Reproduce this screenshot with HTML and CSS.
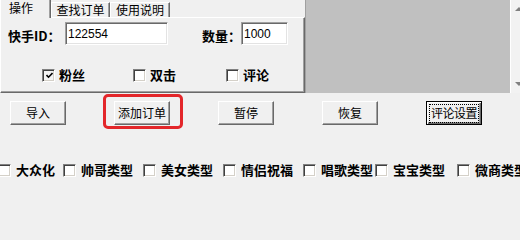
FILE: index.html
```html
<!DOCTYPE html>
<html lang="zh-CN">
<head>
<meta charset="utf-8">
<title>快手订单</title>
<link rel="stylesheet" href="styles.css">
</head>
<body>
<div class="top">
  <div class="tabctl">
    <div class="tabstrip">
      <div class="tab sel">操作</div>
      <div class="tab t2">查找订单</div>
      <div class="tab t3">使用说明</div>
    </div>
    <div class="page">
      <div class="fields">
        <span class="lbl lbl-id">快手ID：</span>
        <div class="input in-id">122554</div>
        <span class="lbl lbl-qty">数量：</span>
        <div class="input in-qty">1000</div>
      </div>
      <div class="checks">
        <div class="opt"><span class="cb checked"><svg width="7" height="7" viewBox="0 0 7 7"><path d="M0.5 3 L2.5 5.2 L6.5 1" fill="none" stroke="#000" stroke-width="1.6"/></svg></span><span class="olbl">粉丝</span></div>
        <div class="opt"><span class="cb"></span><span class="olbl">双击</span></div>
        <div class="opt"><span class="cb"></span><span class="olbl">评论</span></div>
      </div>
    </div>
  </div>
  <div class="list">
    <div class="face"></div>
    <div class="vscroll">
      <span class="arr up"></span>
      <span class="arr down"></span>
    </div>
  </div>
</div>

<div class="buttons">
  <div class="btn">导入</div>
  <div class="btn annot">添加订单</div>
  <div class="btn">暂停</div>
  <div class="btn">恢复</div>
  <div class="btn default"><span class="focus">评论设置</span></div>
</div>

<div class="options">
  <div class="opt"><span class="cb"></span><span class="olbl">大众化</span></div>
  <div class="opt"><span class="cb"></span><span class="olbl">帅哥类型</span></div>
  <div class="opt"><span class="cb"></span><span class="olbl">美女类型</span></div>
  <div class="opt"><span class="cb"></span><span class="olbl">情侣祝福</span></div>
  <div class="opt"><span class="cb"></span><span class="olbl">唱歌类型</span></div>
  <div class="opt"><span class="cb"></span><span class="olbl">宝宝类型</span></div>
  <div class="opt"><span class="cb"></span><span class="olbl">微商类型</span></div>
</div>
</body>
</html>
```

FILE: styles.css
```css
* { box-sizing: border-box; }
html, body { margin: 0; padding: 0; }
body {
  width: 520px;
  height: 215px;
  overflow: hidden;
  background: #f0f0f0;
  font-family: "Noto Sans CJK SC", "Liberation Sans", sans-serif;
  font-size: 12px;
  color: #000;
}

.top {
  display: flex;
  height: 93px;
}

.tabctl {
  width: 305px;
  flex: none;
  display: flex;
  flex-direction: column;
}

.tabstrip {
  display: flex;
  align-items: flex-end;
  height: 17px;
  flex: none;
}

.tab {
  height: 15px;
  line-height: 14px;
  text-align: center;
  border-top: 1px solid #fff;
  border-left: 1px solid #fff;
  border-right: 1px solid #696969;
  box-shadow: inset -1px 0 #a0a0a0;
  background: #f0f0f0;
}
.tab.sel {
  width: 51px;
  height: 18px;
  margin-bottom: -1px;
  padding: 1px 0 0 8px;
  text-align: left;
  line-height: 14px;
  border-top: none;
  position: relative;
  z-index: 1;
}
.tab.t2 { width: 59px; }
.tab.t3 { width: 60px; }

.page {
  flex: 1;
  border-top: 1px solid #fff;
  border-left: 1px solid #fff;
  border-right: 1px solid #696969;
  border-bottom: 1px solid #696969;
  box-shadow: inset -1px -1px #a0a0a0;
  padding: 4px 0 0 7px;
}

.fields {
  display: flex;
  align-items: center;
  height: 23px;
}
.lbl {
  font-weight: bold;
  font-size: 13px;
  line-height: 14px;
  padding-top: 4px;
  white-space: nowrap;
}
.lbl-id { width: 57px; }
.lbl-qty { width: 39px; margin-left: 34px; }

.input {
  height: 23px;
  background: #fff;
  border: 1px solid;
  border-color: #a0a0a0 #fff #fff #a0a0a0;
  box-shadow: inset 1px 1px #696969, inset -1px -1px #e3e3e3;
  font-family: "Liberation Sans", sans-serif;
  font-size: 12px;
  line-height: 14px;
  padding: 4px 0 0 2px;
}
.in-id { width: 103px; }
.in-qty { width: 47px; }

.checks {
  display: grid;
  grid-template-columns: 91px 93px auto;
  margin: 23px 0 0 34px;
  height: 13px;
}

.opt {
  display: flex;
  align-items: center;
  gap: 5px;
  white-space: nowrap;
}
.checks .opt { gap: 4px; }

.cb {
  width: 13px;
  height: 13px;
  flex: none;
  background: #fff;
  border: 1px solid;
  border-color: #808080 #fff #fff #808080;
  box-shadow: inset 1px 1px #404040, inset -1px -1px #d4d0c8;
  display: flex;
  align-items: center;
  justify-content: center;
}
.cb.checked { background: #f4f4f4; }
.cb svg { display: block; margin: 1px 0 0 1px; }

.olbl {
  font-weight: bold;
  font-size: 13px;
  line-height: 14px;
}

.list {
  width: 215px;
  flex: none;
  display: flex;
  overflow: hidden;
  border-left: 1px solid #a0a0a0;
}
.face {
  width: 204px;
  flex: none;
  background: #c0c0c0;
}
.vscroll {
  width: 17px;
  flex: none;
  background: #f2f2f2;
  border-left: 1px solid #fff;
  display: flex;
  flex-direction: column;
  align-items: center;
  justify-content: space-between;
  padding: 7px 0 7px;
}
.arr {
  width: 0;
  height: 0;
  border-left: 4px solid transparent;
  border-right: 4px solid transparent;
}
.arr.up { border-bottom: 4px solid #808080; }
.arr.down { border-top: 4px solid #808080; }

.buttons {
  display: flex;
  gap: 48px;
  padding-left: 10px;
  margin-top: 8px;
}
.btn {
  width: 56px;
  height: 24px;
  flex: none;
  background: #f0f0f0;
  border: 1px solid;
  border-color: #fff #696969 #696969 #fff;
  box-shadow: inset -1px -1px #a0a0a0;
  display: flex;
  align-items: center;
  justify-content: center;
  font-size: 12px;
  line-height: 14px;
  padding-bottom: 1px;
}
.btn.annot { position: relative; }
.btn.annot::after {
  content: "";
  position: absolute;
  left: -12px;
  top: -8px;
  right: -14px;
  bottom: -5px;
  border: 3px solid #e3262a;
  border-radius: 5px;
}
.btn.default {
  border: 1px solid #000;
  box-shadow: inset 1px 1px #fff, inset -1px -1px #696969, inset -2px -2px #a0a0a0;
  padding: 0;
}
.focus {
  width: 50px;
  height: 19px;
  border: 1px dotted #000;
  display: flex;
  align-items: center;
  justify-content: center;
  letter-spacing: -0.5px;
}

.options {
  display: grid;
  grid-template-columns: 65px 80px 80px 80px 72px 82px 80px;
  margin: 38px 0 0 -2px;
  height: 14px;
}
```
